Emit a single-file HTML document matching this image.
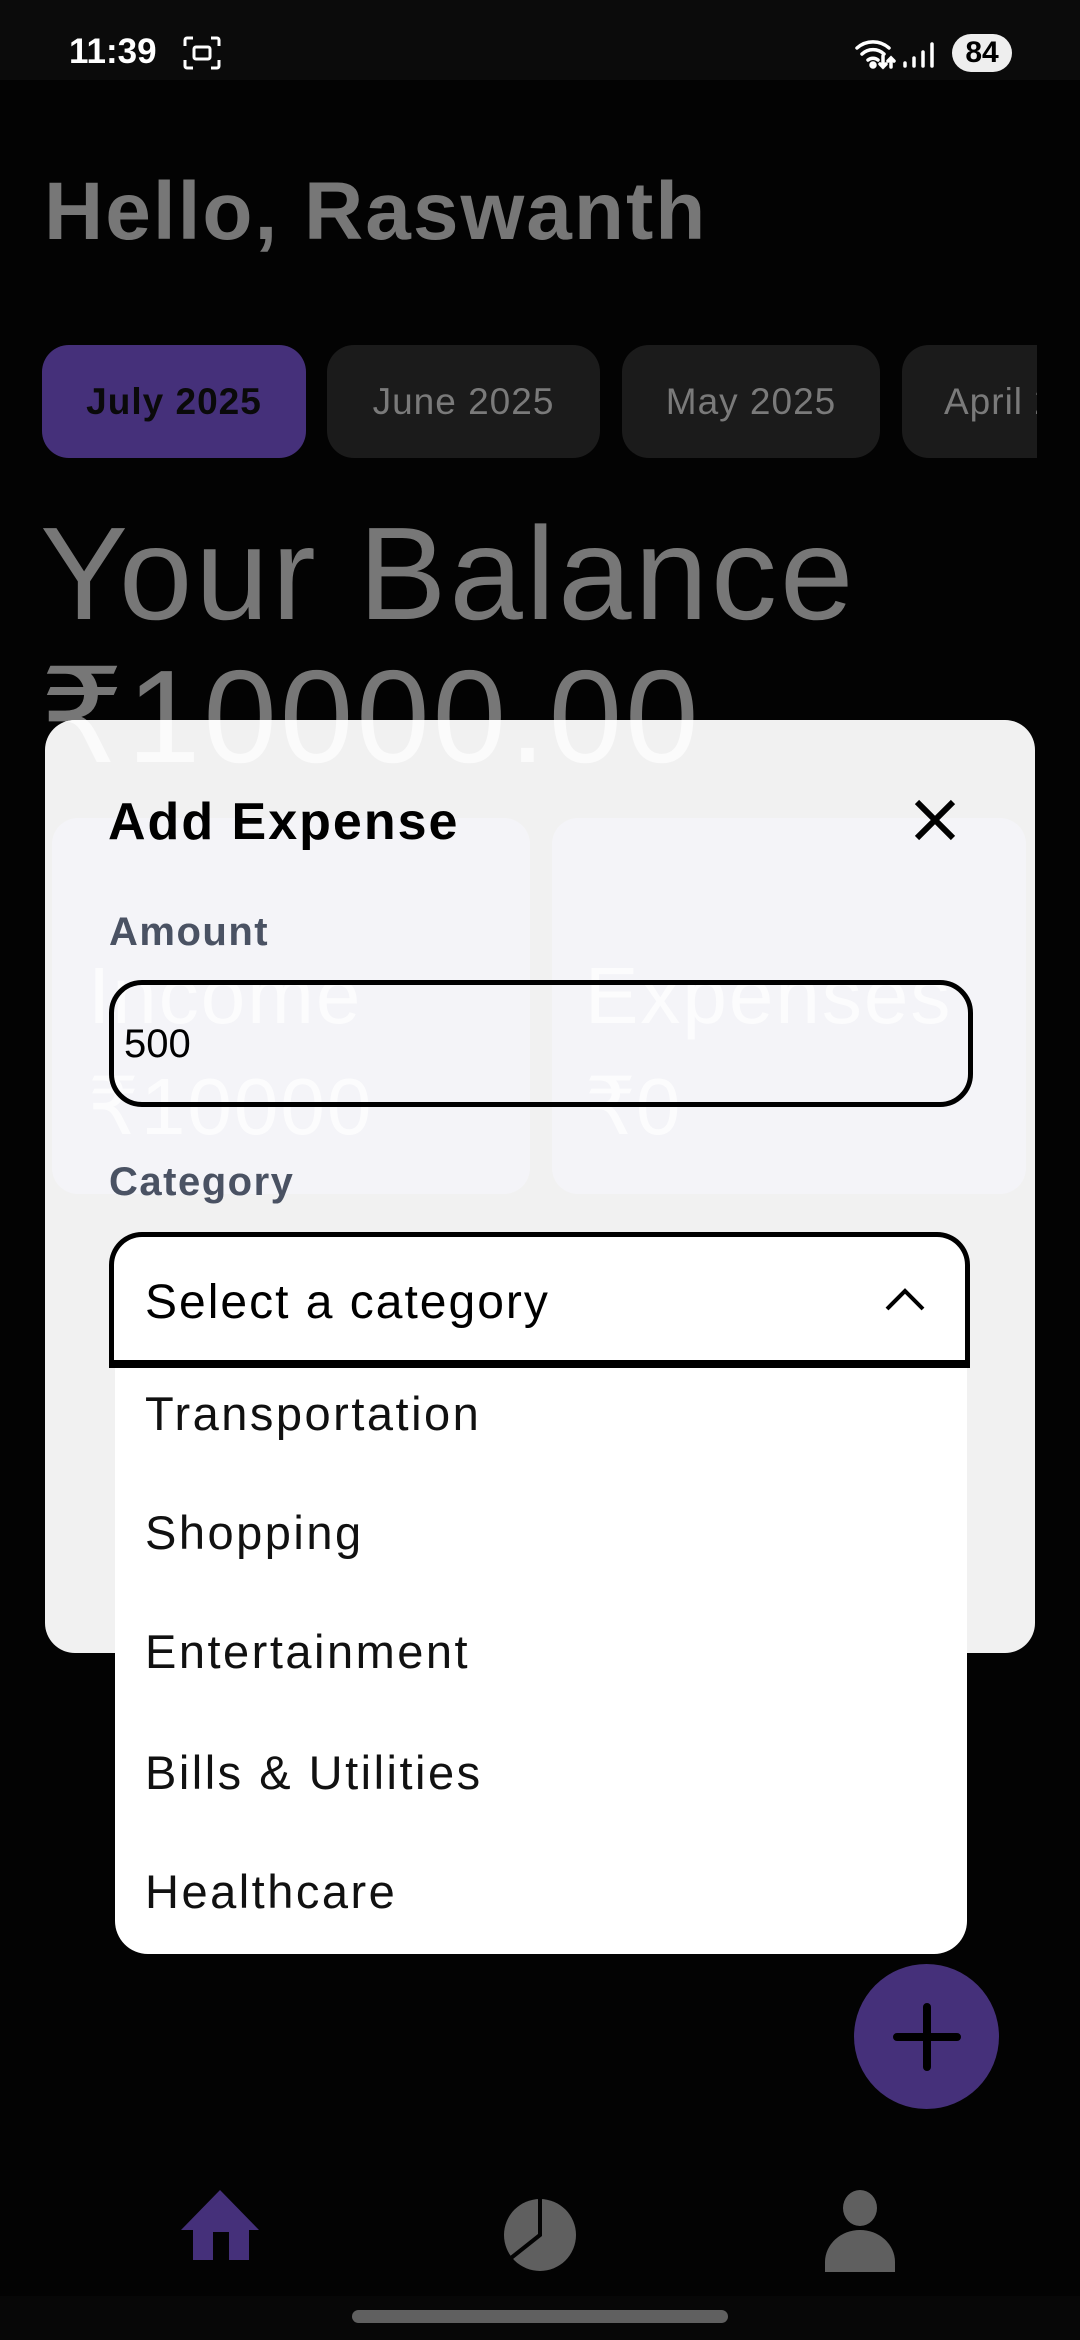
<!DOCTYPE html>
<html><head><meta charset="utf-8"><style>
*{margin:0;padding:0;box-sizing:border-box}
body{width:1080px;height:2340px;background:#030303;position:relative;overflow:hidden;font-family:"Liberation Sans",sans-serif}
.abs{position:absolute;white-space:nowrap}
.chip{position:absolute;top:345px;height:113px;border-radius:27px;background:#1b1b1b;color:#7a7a7a;font-size:37px;display:flex;align-items:center;justify-content:center;white-space:nowrap;letter-spacing:1px}
.item{position:absolute;left:145px;font-size:47px;color:#111;line-height:1;letter-spacing:2.5px;white-space:nowrap}
.bal{position:absolute;font-size:132px;font-weight:300;letter-spacing:3px;white-space:nowrap}
</style></head><body>
<div class="abs" style="left:0;top:0;width:1080px;height:80px;background:#0b0b0b"></div>
<div class="abs" style="left:69px;top:32px;font-size:35px;font-weight:bold;color:#fff">11:39</div>
<svg class="abs" style="left:183px;top:36px" width="38" height="34" viewBox="0 0 38 34" fill="none" stroke="#fff" stroke-width="3"><path d="M2 10V4a2 2 0 0 1 2-2h6M28 2h6a2 2 0 0 1 2 2v6M36 24v6a2 2 0 0 1-2 2h-6M10 32H4a2 2 0 0 1-2-2v-6"/><rect x="11" y="11" width="16" height="12" rx="2"/></svg>
<svg class="abs" style="left:853px;top:36px" width="90" height="34" viewBox="0 0 90 34" fill="none" stroke="#fff" stroke-width="3.5" stroke-linecap="round"><path d="M4 12a24 24 0 0 1 32 0M9 18a16 16 0 0 1 22 0M15 24a8 8 0 0 1 10 0"/><circle cx="20" cy="29" r="2" fill="#fff"/><path d="M30 20v11M27 28l3 3 3-3M38 31v-9M35 25l3-3 3 3M52 30v-3M61 30v-8M70 30v-14M79 30v-22"/></svg>
<div class="abs" style="left:952px;top:34px;width:60px;height:38px;border-radius:19px;background:#eee;color:#000;font-size:30px;font-weight:bold;text-align:center;line-height:38px">84</div>

<div class="abs" style="left:44px;top:165px;font-size:82px;font-weight:bold;color:#777;letter-spacing:2px">Hello, Raswanth</div>
<div class="chip" style="left:42px;width:264px;background:#45307a;color:#0a0a0a;font-weight:bold">July 2025</div>
<div class="chip" style="left:327px;width:273px">June 2025</div>
<div class="chip" style="left:622px;width:258px">May 2025</div>
<div style="position:absolute;left:902px;top:345px;width:135px;height:113px;overflow:hidden"><div class="chip" style="left:0;top:0;width:260px;justify-content:flex-start;padding-left:42px">April 2025</div></div>
<div class="bal" style="left:40px;top:498px;color:#777">Your Balance</div>
<div class="bal" style="left:40px;top:640px;color:#777">₹10000.00</div>

<div class="abs" style="left:45px;top:720px;width:990px;height:933px;border-radius:30px;background:#f1f1f1;overflow:hidden">
<div class="bal" style="left:-5px;top:-80px;color:#fbfbfb">₹10000.00</div>
</div>
<div class="abs" style="left:52px;top:818px;width:478px;height:376px;border-radius:26px;background:#f4f4f8"></div>
<div class="abs" style="left:552px;top:818px;width:474px;height:376px;border-radius:26px;background:#f4f4f8"></div>
<div class="abs" style="left:88px;top:950px;font-size:80px;color:#fcfcfd;letter-spacing:2px">Income</div>
<div class="abs" style="left:88px;top:1060px;font-size:80px;color:#fcfcfd;letter-spacing:2px">₹10000</div>
<div class="abs" style="left:585px;top:950px;font-size:80px;color:#fcfcfd;letter-spacing:2px">Expenses</div>
<div class="abs" style="left:585px;top:1060px;font-size:80px;color:#fcfcfd">₹0</div>

<div class="abs" style="left:108px;top:792px;font-size:52px;font-weight:bold;color:#000;letter-spacing:2px">Add Expense</div>
<svg class="abs" style="left:913px;top:798px" width="44" height="44" viewBox="0 0 44 44" stroke="#000" stroke-width="6"><path d="M4 4L40 40M40 4L4 40"/></svg>
<div class="abs" style="left:109px;top:910px;font-size:40px;font-weight:bold;color:#4a5263;letter-spacing:1.5px">Amount</div>
<div class="abs" style="left:109px;top:980px;width:864px;height:127px;border:5px solid #000;border-radius:33px"></div>
<div class="abs" style="left:124px;top:1022px;font-size:40px;color:#000">500</div>
<div class="abs" style="left:109px;top:1160px;font-size:40px;font-weight:bold;color:#4a5263;letter-spacing:1.5px">Category</div>
<div class="abs" style="left:109px;top:1232px;width:861px;height:136px;background:#fff;border:5px solid #000;border-bottom-width:8px;border-radius:33px 33px 0 0"></div>
<div class="abs" style="left:145px;top:1275px;font-size:48px;color:#000;letter-spacing:2px">Select a category</div>
<svg class="abs" style="left:884px;top:1286px" width="42" height="26" viewBox="0 0 42 26" fill="none" stroke="#000" stroke-width="4"><path d="M3 23L21 5L39 23"/></svg>
<div class="abs" style="left:115px;top:1368px;width:852px;height:586px;background:#fff;border-radius:0 0 33px 33px"></div>
<div class="item" style="top:1390px">Transportation</div>
<div class="item" style="top:1509px">Shopping</div>
<div class="item" style="top:1628px">Entertainment</div>
<div class="item" style="top:1749px">Bills &amp; Utilities</div>
<div class="item" style="top:1868px">Healthcare</div>

<div class="abs" style="left:854px;top:1964px;width:145px;height:145px;border-radius:50%;background:#45307a"></div>
<svg class="abs" style="left:891px;top:2001px" width="72" height="72" viewBox="0 0 72 72" stroke="#000" stroke-width="8" stroke-linecap="round"><path d="M36 6V66M6 36H66"/></svg>

<svg class="abs" style="left:181px;top:2190px" width="78" height="70" viewBox="0 0 78 70" fill="#45307a"><path d="M39 0L78 40H68V70H48V42H32V70H12V40H0Z"/></svg>
<svg class="abs" style="left:503px;top:2196px" width="74" height="76" viewBox="0 0 74 76"><circle cx="37" cy="39" r="36" fill="#5f5f5f"/><path d="M37 0V39L8 62" stroke="#030303" stroke-width="4" fill="none"/></svg>
<svg class="abs" style="left:825px;top:2190px" width="70" height="82" viewBox="0 0 70 82" fill="#5f5f5f"><ellipse cx="35" cy="18" rx="17" ry="18"/><path d="M0 82V72a35 32 0 0 1 70 0v10Z"/></svg>
<div class="abs" style="left:0;top:2296px;width:1080px;height:44px;background:#070707"></div>
<div class="abs" style="left:352px;top:2310px;width:376px;height:13px;border-radius:7px;background:#606060"></div>
</body></html>
